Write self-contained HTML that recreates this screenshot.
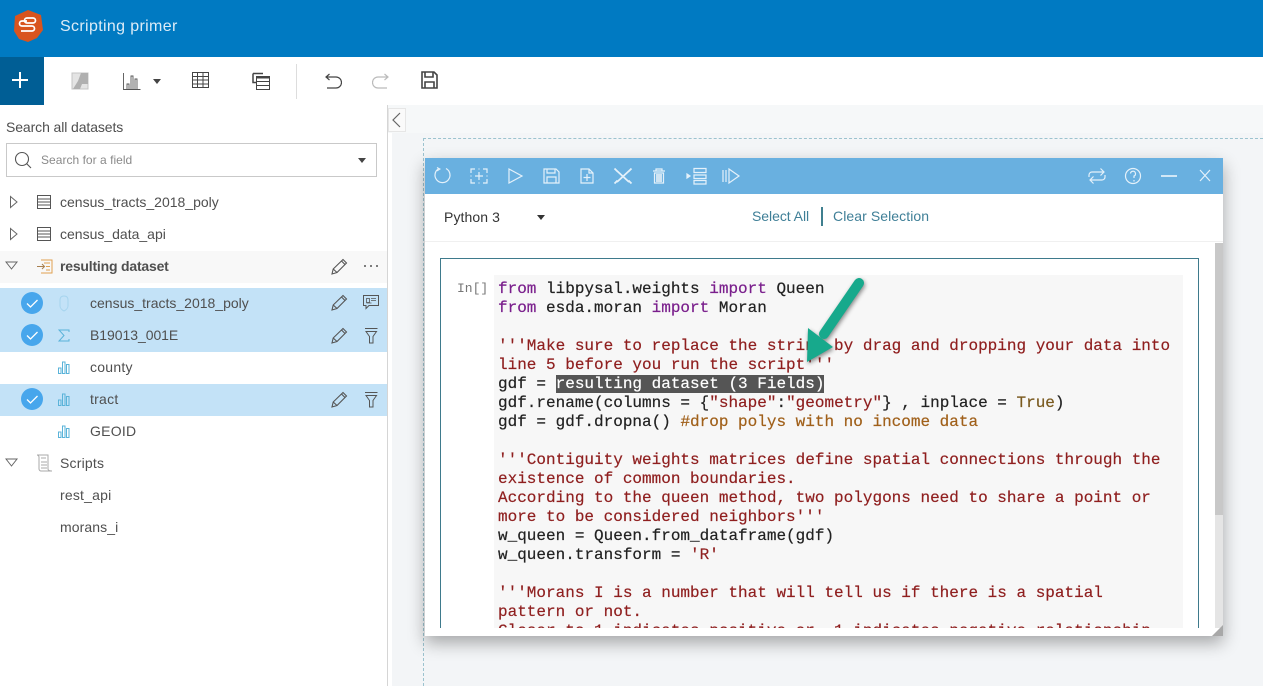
<!DOCTYPE html>
<html><head><meta charset="utf-8"><style>
html,body{margin:0;padding:0}
body{width:1263px;height:686px;position:relative;overflow:hidden;background:#f3f5f7;font-family:"Liberation Sans",sans-serif;color:#4c4c4c}
.a,svg{position:absolute}
.t{position:absolute;font-size:14px;line-height:20px;white-space:nowrap;color:#4f4f4f;letter-spacing:.1px}
.code{position:absolute;left:498px;top:280px;width:680px;height:348px;overflow:hidden;font:16px/19px "Liberation Mono",monospace;color:#222;white-space:pre;-webkit-text-stroke:.2px}
.k{color:#7a1f8c}.s{color:#8f1f1f}.c{color:#a0601a}
.hl{background:#555;color:#fff}
</style></head><body>
<div class="a" style="left:0;top:0;width:1263px;height:57px;background:#007ac2"></div>
<svg style="left:12px;top:9px" width="32" height="34" viewBox="0 0 32 34"><path d="M16 1L29 6L31 21L25 29L16 33L7 30L2 22L3 7Z" fill="#d9541e"/><path d="M21 9h-6a1.500 1.500 0 0 0 0 5h6a1.500 1.500 0 0 0 0-5M15 12h-5a2 2 0 0 0 0 5h10a2 2 0 0 1 0 5H9" fill="none" stroke="#fff" stroke-width="1.700"/></svg>
<div class="t" style="left:60px;top:17px;font-size:16px;color:#dcecf7;letter-spacing:.35px">Scripting primer</div>

<div class="a" style="left:0;top:57px;width:1263px;height:48px;background:#fff"></div>
<div class="a" style="left:0;top:57px;width:44px;height:48px;background:#005e95"></div>
<svg style="left:11px;top:71px" width="18" height="18"><path d="M9 1v16M1 9h16" stroke="#fff" stroke-width="2"/></svg>
<svg style="left:71px;top:72px" width="18" height="18"><rect x="1" y="1" width="16" height="16" fill="#e4e4e4" stroke="#c4c4c4"/><path d="M17 1L10 1L7 9L2 17H9L11 12H17Z" fill="#b0b0b0"/></svg>
<svg style="left:123px;top:72px" width="18" height="18" fill="none" stroke="#555" stroke-width=".9"><path d="M.5 1v16.500h17M4 17v-5h2v5M8 17V4h2v13M12 17V7h2v10"/></svg>
<svg style="left:152px;top:79px" width="10" height="6"><path d="M1 0h8L5 5z" fill="#444"/></svg>
<svg style="left:192px;top:72px" width="18" height="18" fill="none" stroke="#444"><rect x=".5" y=".5" width="16" height="15"/><path d="M.5 4.500h16M.5 8h16M.5 12h16M5.500 .5v15M11 .5v15"/></svg>
<svg style="left:252px;top:72px" width="18" height="18" fill="none" stroke="#444"><path d="M1 1.500h10M1 1.500v9h3" stroke-width="1.500"/><rect x="4.500" y="4.500" width="13" height="13" fill="#fff"/><path d="M4.500 5.500h13" stroke-width="2"/><path d="M4.500 9.500h13M4.500 13.500h13"/></svg>
<div class="a" style="left:296px;top:64px;width:1px;height:35px;background:#ddd"></div>
<svg style="left:324px;top:72px" width="18" height="18" fill="none" stroke="#444" stroke-width="1.200"><path d="M3 5h9a4.500 4.500 0 0 1 0 11H3M5.500 2L2 5l3.500 3"/></svg>
<svg style="left:372px;top:72px" width="18" height="18" fill="none" stroke="#bbb" stroke-width="1.200"><path d="M15 5H6a4.500 4.500 0 0 0 0 11h9M12.500 2L16 5l-3.500 3"/></svg>
<svg style="left:421px;top:71px" width="17" height="18" fill="none" stroke="#444" stroke-width="1.600"><path d="M1 1h12l3 3v13H1z"/><path d="M4 1v5h8V1M4 17v-6h9v6"/></svg>

<!-- sidebar -->
<div class="a" style="left:0;top:105px;width:387px;height:581px;background:#fff"></div>
<div class="a" style="left:387px;top:105px;width:1px;height:581px;background:#d5d5d5"></div>
<div class="a" style="left:388px;top:105px;width:4px;height:581px;background:#fff"></div>
<div class="a" style="left:388px;top:105px;width:875px;height:28px;background:#f6f8f9"></div>
<div class="a" style="left:388px;top:108px;width:18px;height:24px;background:#fafafa;border:1px solid #e6e6e6;box-sizing:border-box"></div>
<svg style="left:391px;top:112px" width="12" height="16"><path d="M9 1L2 8l7 7" fill="none" stroke="#666" stroke-width="1.200"/></svg>

<div class="t" style="left:6px;top:117px;letter-spacing:-.1px">Search all datasets</div>
<div class="a" style="left:6px;top:143px;width:371px;height:34px;border:1px solid #c9c9c9;box-sizing:border-box"></div>
<svg style="left:14px;top:151px" width="18" height="18" fill="none" stroke="#555" stroke-width="1.100"><circle cx="8" cy="8" r="6.500"/><path d="M12.500 12.500L17 17"/></svg>
<div class="t" style="left:41px;top:150px;font-size:12px;color:#8a8a8a;letter-spacing:.03px">Search for a field</div>
<svg style="left:357px;top:158px" width="10" height="6"><path d="M1 0h8L5 5z" fill="#444"/></svg>

<svg style="left:9px;top:195px" width="10" height="14"><path d="M1.500 1.500L8 7l-6.500 5.500z" fill="none" stroke="#666"/></svg>
<svg style="left:37px;top:195px" width="15" height="14" fill="none" stroke="#555"><rect x=".5" y=".5" width="13" height="13"/><path d="M.5 4h13M.5 7h13M.5 10h13"/></svg>
<div class="t" style="left:60px;top:192px;letter-spacing:0">census_tracts_2018_poly</div>
<svg style="left:9px;top:227px" width="10" height="14"><path d="M1.500 1.500L8 7l-6.500 5.500z" fill="none" stroke="#666"/></svg>
<svg style="left:37px;top:227px" width="15" height="14" fill="none" stroke="#555"><rect x=".5" y=".5" width="13" height="13"/><path d="M.5 4h13M.5 7h13M.5 10h13"/></svg>
<div class="t" style="left:60px;top:224px;letter-spacing:0">census_data_api</div>

<div class="a" style="left:0;top:251px;width:387px;height:32px;background:#f8f8f8"></div>
<svg style="left:5px;top:261px" width="14" height="10"><path d="M1 1h11L6.500 8z" fill="none" stroke="#666"/></svg>
<svg style="left:37px;top:259px" width="16" height="15" fill="none" stroke="#e0a050"><path d="M4 1h11v13H4M7 4h6M9 7.500h4M9 11h4"/><path d="M0 7.500h7M5 5l2.500 2.500L5 10" stroke="#a88050"/></svg>
<div class="t" style="left:60px;top:256px;font-weight:bold;letter-spacing:-.2px">resulting dataset</div>
<svg style="left:331px;top:258px" width="17" height="17" fill="none" stroke="#555" stroke-width="1.100"><path d="M1 16l1.200-5L12 1.500l3.500 3.500L6 14.500zM2.200 11l3.800 3.500M10.500 3l3.500 3.500"/></svg>
<svg style="left:363px;top:264px" width="16" height="4" fill="#555"><circle cx="2" cy="2" r="1"/><circle cx="8" cy="2" r="1"/><circle cx="14" cy="2" r="1"/></svg>

<div class="a" style="left:0;top:288px;width:387px;height:32px;background:#c3e2f7"></div>
<div class="a" style="left:0;top:320px;width:387px;height:32px;background:#c3e2f7"></div>
<div class="a" style="left:0;top:384px;width:387px;height:32px;background:#c3e2f7"></div>

<svg style="left:21px;top:292px" width="23" height="23"><circle cx="11" cy="11" r="11" fill="#47a6ec"/><path d="M6 11.500l3.500 3.500L16.500 8" fill="none" stroke="#fff" stroke-width="1.300"/></svg>
<svg style="left:21px;top:324px" width="23" height="23"><circle cx="11" cy="11" r="11" fill="#47a6ec"/><path d="M6 11.500l3.500 3.500L16.500 8" fill="none" stroke="#fff" stroke-width="1.300"/></svg>
<svg style="left:21px;top:388px" width="23" height="23"><circle cx="11" cy="11" r="11" fill="#47a6ec"/><path d="M6 11.500l3.500 3.500L16.500 8" fill="none" stroke="#fff" stroke-width="1.300"/></svg>

<svg style="left:58px;top:295px" width="12" height="17"><path d="M6 1C3 1 2 3 2 5v6c0 2 2 4 4 5 2-1 4-3 4-5V5c0-2-1-4-4-4z" fill="none" stroke="#a6d4ee"/></svg>
<div class="t" style="left:90px;top:293px;letter-spacing:0">census_tracts_2018_poly</div>
<svg style="left:331px;top:294px" width="17" height="17" fill="none" stroke="#555" stroke-width="1.100"><path d="M1 16l1.200-5L12 1.500l3.500 3.500L6 14.500zM2.200 11l3.800 3.500M10.500 3l3.500 3.500"/></svg>
<svg style="left:362px;top:294px" width="18" height="17" fill="none" stroke="#555"><path d="M1.500 1.500h15v10H7l-3 3v-3H1.500z"/><rect x="4.500" y="4.500" width="3" height="4" stroke-width=".8"/><path d="M9 4.500h5M9 6.500h5M4.500 9h5" stroke-width=".8"/></svg>

<svg style="left:58px;top:329px" width="12" height="13"><path d="M11 3V1H1l5 5.500-5 5.500h10v-2" fill="none" stroke="#5ab3d9"/></svg>
<div class="t" style="left:90px;top:325px;letter-spacing:-.05px">B19013_001E</div>
<svg style="left:331px;top:327px" width="17" height="17" fill="none" stroke="#555" stroke-width="1.100"><path d="M1 16l1.200-5L12 1.500l3.500 3.500L6 14.500zM2.200 11l3.800 3.500M10.500 3l3.500 3.500"/></svg>
<svg style="left:364px;top:327px" width="15" height="17" fill="none" stroke="#555"><path d="M1 1.500h12.500M2 4.500h10.500L9 9.500v6.500H5.500V9.500z"/></svg>

<svg style="left:58px;top:361px" width="12" height="13" fill="none" stroke="#5ab3d9"><path d="M.5 7h2.500v5.500H.5zM4.500 1h2.500v11.500H4.500zM8.500 3.500h2.500v9H8.500z"/></svg>
<div class="t" style="left:90px;top:357px;letter-spacing:.25px">county</div>
<svg style="left:58px;top:393px" width="12" height="13" fill="none" stroke="#5ab3d9"><path d="M.5 7h2.500v5.500H.5zM4.500 1h2.500v11.500H4.500zM8.500 3.500h2.500v9H8.500z"/></svg>
<div class="t" style="left:90px;top:389px;letter-spacing:.25px">tract</div>
<svg style="left:331px;top:391px" width="17" height="17" fill="none" stroke="#555" stroke-width="1.100"><path d="M1 16l1.200-5L12 1.500l3.500 3.500L6 14.500zM2.200 11l3.800 3.500M10.500 3l3.500 3.500"/></svg>
<svg style="left:364px;top:391px" width="15" height="17" fill="none" stroke="#555"><path d="M1 1.500h12.500M2 4.500h10.500L9 9.500v6.500H5.500V9.500z"/></svg>
<svg style="left:58px;top:425px" width="12" height="13" fill="none" stroke="#5ab3d9"><path d="M.5 7h2.500v5.500H.5zM4.500 1h2.500v11.500H4.500zM8.500 3.500h2.500v9H8.500z"/></svg>
<div class="t" style="left:90px;top:421px;letter-spacing:.25px">GEOID</div>

<svg style="left:5px;top:458px" width="14" height="10"><path d="M1 1h11L6.500 8z" fill="none" stroke="#666"/></svg>
<svg style="left:36px;top:454px" width="17" height="18" fill="none" stroke="#aaa"><path d="M1 1h11v14c0 1 1 2 4 2H5c-1 0-2-1-2-2V3C3 2 2 1 1 1zM5 4h5M5 8h6M5 11h6M5 14h6"/></svg>
<div class="t" style="left:60px;top:453px;letter-spacing:.2px">Scripts</div>
<div class="t" style="left:60px;top:485px;letter-spacing:.2px">rest_api</div>
<div class="t" style="left:60px;top:517px">morans_i</div>

<!-- canvas dashes -->
<div class="a" style="left:423px;top:138px;width:840px;height:0;border-top:1px dashed #9cc3cf"></div>
<div class="a" style="left:423px;top:138px;width:0;height:548px;border-left:1px dashed #9cc3cf"></div>

<!-- window -->
<div class="a" style="left:425px;top:158px;width:798px;height:478px;background:#fff;box-shadow:0 7px 16px rgba(0,0,0,.32)"></div>
<div class="a" style="left:425px;top:158px;width:798px;height:36px;background:#69b0e0"></div>
<svg style="left:425px;top:158px" width="330" height="36" fill="none" stroke="#e4f1fa" stroke-width="1.200">
<path d="M14 10.500a7.500 7.500 0 1 0 7 0"/><path d="M12 9.500l3 1.500-3 2" stroke-width="1"/>
<path d="M46 15v-4h4M58 11h4v4M62 21v4h-4M50 25h-4v-4M54 14v8M50 18h8M46 17.500v1M62 17.500v1M53.500 11h1M53.500 25h1"/>
<path d="M84 11l13 7-13 7z"/>
<path d="M119 11h12l3 3v11h-15zM122 11v4h8v-4M122 25v-6h9v6"/>
<path d="M156 11h8l4 4v10h-12zM164 11v4h4M162 16v7M158.500 19.500h7"/>
<path d="M191 12l13 12M205 12l-13 12M189.500 10.500l3 3M206.500 25.500l-3-3M206.500 10.500l-3 3M189.500 25.500l3-3" stroke-width="1.800"/>
<path d="M228 13h12M231 13v-2h6v2M229.500 15v10h9V15z"/><rect x="231" y="16" width="6" height="8" fill="#cfe4f3" stroke="none"/>
<path d="M269 10.500h12v4h-12zM269 17h12v3.500h-12zM269 22.500h12v3.500h-12z"/><path d="M262 16l3 2-3 2z" fill="#e4f1fa"/>
<path d="M298 12v12M301 12v12M304 12v12M304 11l10 7-10 7z"/>
</svg>
<svg style="left:1085px;top:158px" width="130" height="36" fill="none" stroke="#e4f1fa" stroke-width="1.200">
<path d="M4 19v-2a3 3 0 0 1 3-3h12M15.500 10.500L19 14l-3.500 3.500M20 17v2a3 3 0 0 1-3 3H5M8.500 18.500L5 22l3.500 3.500"/><circle cx="48" cy="18" r="7.500"/><path d="M45.500 15.500a2.500 2.500 0 1 1 3.500 2.500v2M49 22v1.500"/><path d="M76 18h16" stroke-width="1.700"/><path d="M115 12l10 11M125 12l-10 11"/>
</svg>

<div class="t" style="left:444px;top:207px;color:#333">Python 3</div>
<svg style="left:536px;top:215px" width="10" height="6"><path d="M1 0h8L5 5z" fill="#333"/></svg>
<div class="t" style="left:752px;top:206px;color:#3f7f97;letter-spacing:-.05px">Select All</div>
<div class="a" style="left:821px;top:207px;width:2px;height:19px;background:#3f7f8f"></div>
<div class="t" style="left:833px;top:206px;color:#3f7f97;letter-spacing:.08px">Clear Selection</div>
<div class="a" style="left:425px;top:241px;width:798px;height:1px;background:#f0f0f0"></div>

<div class="a" style="left:1215px;top:243px;width:8px;height:272px;background:#c8c8c8"></div>
<div class="a" style="left:1215px;top:515px;width:8px;height:113px;background:#e5e5e5"></div>

<div class="a" style="left:440px;top:258px;width:759px;height:370px;border:1px solid #3e7a8c;border-bottom:0;box-sizing:border-box"></div>
<div class="a" style="left:494px;top:275px;width:689px;height:353px;background:#f7f7f7"></div>
<div class="a" style="left:457px;top:281px;font:13px/16px 'Liberation Mono',monospace;color:#777">In[]</div>

<div class="code"><span class="k">from</span> libpysal.weights <span class="k">import</span> Queen
<span class="k">from</span> esda.moran <span class="k">import</span> Moran

<span class="s">'''Make sure to replace the string by drag and dropping your data into
line 5 before you run the script'''</span>
gdf = <span class="hl">resulting dataset (3 Fields)</span>
gdf.rename(columns = {<span class="s">"shape"</span>:<span class="s">"geometry"</span>} , inplace = <span class="k" style="color:#7a5a1f">True</span>)
gdf = gdf.dropna() <span class="c">#drop polys with no income data</span>

<span class="s">'''Contiguity weights matrices define spatial connections through the
existence of common boundaries.
According to the queen method, two polygons need to share a point or
more to be considered neighbors'''</span>
w_queen = Queen.from_dataframe(gdf)
w_queen.transform = <span class="s">'R'</span>

<span class="s">'''Morans I is a number that will tell us if there is a spatial
pattern or not.
Closer to 1 indicates positive or -1 indicates negative relationship</span></div>

<svg style="left:800px;top:272px" width="70" height="96"><g filter="drop-shadow(1px 2px 2px rgba(0,0,0,.45))"><path d="M59 11L24 62" stroke="#17a98c" stroke-width="10" stroke-linecap="round" fill="none"/><path d="M7 90L8 56L33 75Z" fill="#17a98c"/></g></svg>

<svg style="left:1212px;top:625px" width="11" height="11"><path d="M11 0v11H0z" fill="#a8a8a8"/></svg>
</body></html>
